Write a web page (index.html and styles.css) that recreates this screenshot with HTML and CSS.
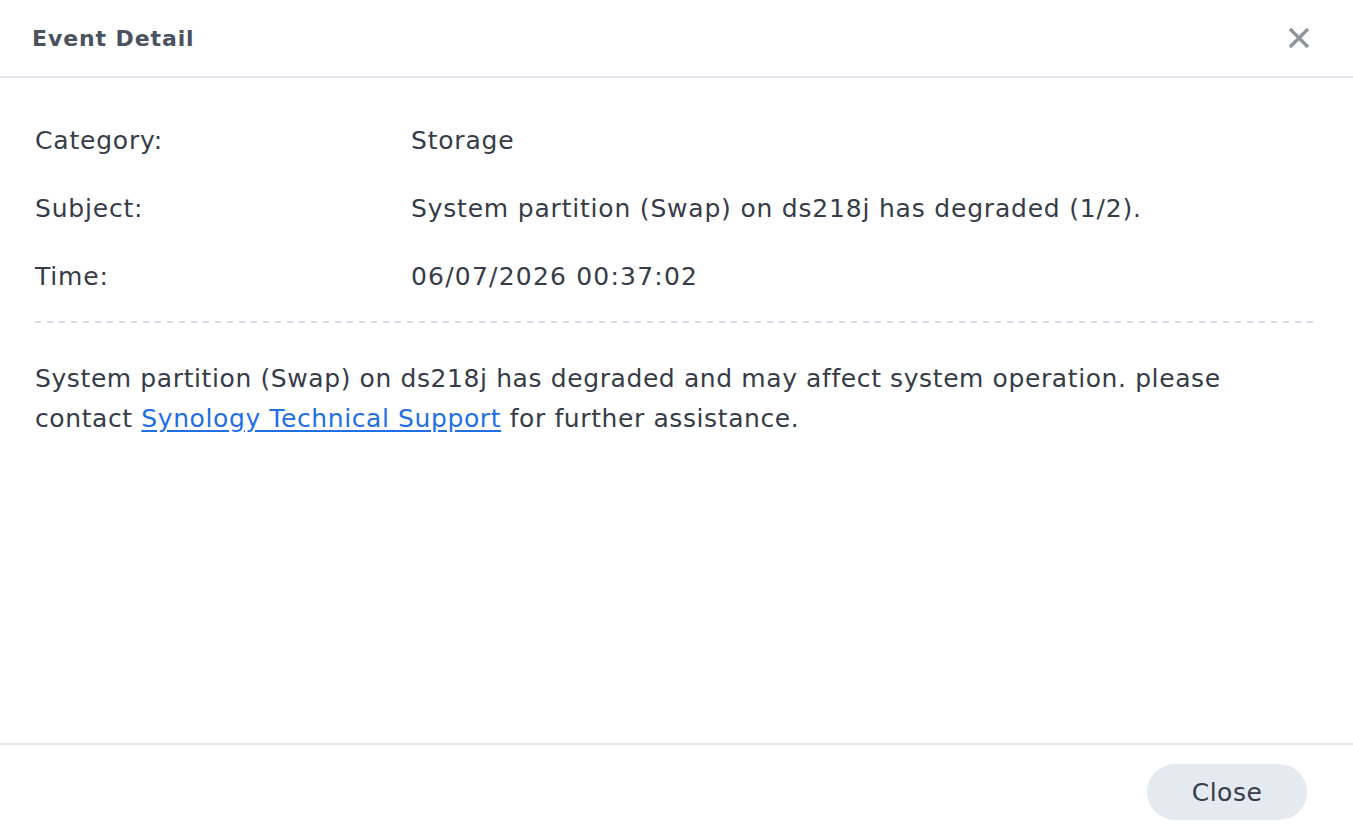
FILE: index.html
```html
<!DOCTYPE html>
<html>
<head>
<meta charset="utf-8">
<link rel="stylesheet" href="styles.css">
</head>
<body>
<div class="dialog">
  <header class="head">
    <h1 class="title">Event Detail</h1>
    <button class="close-x" aria-label="Close">
      <svg width="22" height="22" viewBox="0 0 22 22"><path d="M2 2 L20 20 M20 2 L2 20" stroke="#8e949c" stroke-width="3.2" stroke-linecap="butt"/></svg>
    </button>
  </header>
  <main class="body">
    <div class="fields">
      <div class="label">Category:</div><div class="value">Storage</div>
      <div class="label">Subject:</div><div class="value">System partition (Swap) on ds218j has degraded (1/2).</div>
      <div class="label">Time:</div><div class="value time">06/07/2026 00:37:02</div>
    </div>
    <div class="dashed"></div>
    <p class="desc">System partition (Swap) on ds218j has degraded and may affect system operation. please contact <a href="#" class="link">Synology Technical Support</a> for further assistance.</p>
  </main>
  <footer class="foot">
    <button class="btn">Close</button>
  </footer>
</div>
</body>
</html>
```

FILE: styles.css
```css
html, body {
  margin: 0;
  padding: 0;
  background: #ffffff;
}
body {
  font-family: "DejaVu Sans", Verdana, sans-serif;
  color: #363c48;
}
.dialog {
  height: 835px;
  display: flex;
  flex-direction: column;
}
.head {
  height: 76px;
  border-bottom: 2px solid #e2e6ed;
  display: flex;
  align-items: center;
  justify-content: space-between;
  padding: 0 43px 0 32px;
  box-sizing: content-box;
}
.title {
  margin: 0;
  font-size: 22px;
  letter-spacing: 0.9px;
  font-weight: bold;
  color: #4a5260;
}
.close-x {
  border: 0;
  background: none;
  padding: 0;
  width: 22px;
  height: 22px;
  display: flex;
}
.body {
  flex: 1;
  padding: 28px 38px 0 35px;
}
.fields {
  display: grid;
  grid-template-columns: 376px 1fr;
  grid-auto-rows: 68px;
  align-items: center;
  font-size: 25px;
  letter-spacing: 0.8px;
}
.time {
  letter-spacing: 1.2px;
}
.dashed {
  margin-top: 11px;
  height: 2px;
  background-image: linear-gradient(to right, #d5dbe4 0 6px, transparent 6px 12px);
  background-size: 12px 2px;
  background-repeat: repeat-x;
}
.desc {
  margin: 36px 0 0;
  font-size: 25px;
  letter-spacing: 0.6px;
  line-height: 40px;
}
.link {
  color: #1f6fe5;
  text-decoration: underline;
  text-underline-offset: 3px;
}
.foot {
  border-top: 2px solid #e2e6ed;
  height: 92px;
  display: flex;
  align-items: center;
  justify-content: flex-end;
  padding: 0 46px 0 0;
  box-sizing: border-box;
}
.btn {
  width: 160px;
  height: 56px;
  border: 0;
  border-radius: 28px;
  background: #e5e9f0;
  color: #363c48;
  font-family: "DejaVu Sans", Verdana, sans-serif;
  font-size: 25px;
  letter-spacing: 0.5px;
  margin-top: 4px;
}
```
